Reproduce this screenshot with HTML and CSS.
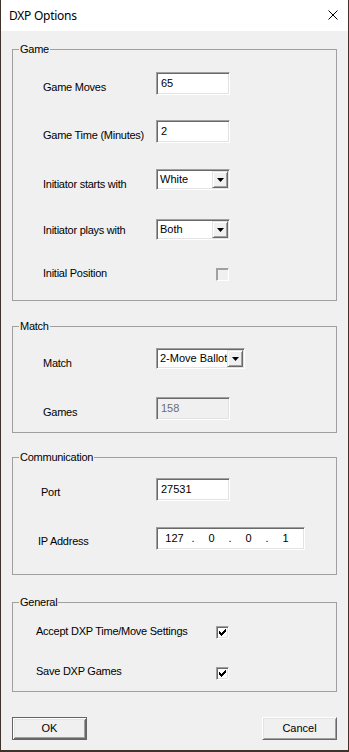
FILE: index.html
```html
<!DOCTYPE html>
<html>
<head>
<meta charset="utf-8">
<link rel="stylesheet" href="styles.css">
</head>
<body>
<div class="window">
  <div class="titlebar">
    <span class="title">DXP Options</span>
    <svg class="close" width="10" height="10" viewBox="0 0 10 10"><path d="M0.5 0.5L9.5 9.5M9.5 0.5L0.5 9.5" stroke="#000" stroke-width="1" fill="none"/></svg>
  </div>
  <div class="client">
    <fieldset class="group g-game">
      <legend>Game</legend>
      <div class="row r-edit r-g1"><span class="label">Game Moves</span><div class="edit">65</div></div>
      <div class="row r-edit r-g2"><span class="label">Game Time (Minutes)</span><div class="edit">2</div></div>
      <div class="row r-combo r-g3"><span class="label">Initiator starts with</span><div class="combo"><span class="val">White</span><span class="dd"><svg width="7" height="4" viewBox="0 0 7 4"><path d="M0 0h7L3.5 4z" fill="#000"/></svg></span></div></div>
      <div class="row r-combo r-g4"><span class="label">Initiator plays with</span><div class="combo"><span class="val">Both</span><span class="dd"><svg width="7" height="4" viewBox="0 0 7 4"><path d="M0 0h7L3.5 4z" fill="#000"/></svg></span></div></div>
      <div class="row r-check r-g5 wide"><span class="label">Initial Position</span><div class="check disabled"></div></div>
    </fieldset>

    <fieldset class="group g-match">
      <legend>Match</legend>
      <div class="row r-combo r-m1"><span class="label">Match</span><div class="combo combo-wide"><span class="val">2-Move Ballot</span><span class="dd"><svg width="7" height="4" viewBox="0 0 7 4"><path d="M0 0h7L3.5 4z" fill="#000"/></svg></span></div></div>
      <div class="row r-edit r-m2"><span class="label">Games</span><div class="edit disabled">158</div></div>
    </fieldset>

    <fieldset class="group g-comm">
      <legend>Communication</legend>
      <div class="row r-edit r-c1"><span class="label">Port</span><div class="edit">27531</div></div>
      <div class="row r-edit r-c2"><span class="label">IP Address</span><div class="edit ip"><span class="oct">127</span><span class="dot">.</span><span class="oct">0</span><span class="dot">.</span><span class="oct">0</span><span class="dot">.</span><span class="oct">1</span></div></div>
    </fieldset>

    <fieldset class="group g-gen">
      <legend>General</legend>
      <div class="row r-check r-e1 wide"><span class="label">Accept DXP Time/Move Settings</span><div class="check"><svg width="7" height="7" viewBox="0 0 7 7" shape-rendering="crispEdges"><path d="M0 2h1v3h-1z M1 3h1v3h-1z M2 4h1v3h-1z M3 3h1v3h-1z M4 2h1v3h-1z M5 1h1v3h-1z M6 0h1v3h-1z" fill="#000"/></svg></div></div>
      <div class="row r-check r-e2 wide"><span class="label">Save DXP Games</span><div class="check"><svg width="7" height="7" viewBox="0 0 7 7" shape-rendering="crispEdges"><path d="M0 2h1v3h-1z M1 3h1v3h-1z M2 4h1v3h-1z M3 3h1v3h-1z M4 2h1v3h-1z M5 1h1v3h-1z M6 0h1v3h-1z" fill="#000"/></svg></div></div>
    </fieldset>

    <div class="buttons">
      <div class="btn default">OK</div>
      <div class="btn">Cancel</div>
    </div>
  </div>
</div>
</body>
</html>
```
FILE: styles.css
```css
html, body {
  margin: 0;
  padding: 0;
}
body {
  background: #3e322a;
  width: 349px;
  height: 752px;
  overflow: hidden;
  font-family: "Liberation Sans", Arial, sans-serif;
  font-size: 11px;
  color: #000;
}
.window {
  margin: 0 1px;
  width: 347px;
  height: 750px;
  background: #f0f0f0;
  display: flex;
  flex-direction: column;
}
.titlebar {
  height: 31px;
  background: #fff;
  display: flex;
  align-items: center;
  justify-content: space-between;
  padding: 0 10px 0 8px;
  flex: none;
}
.title {
  font-family: "Noto Sans", "Segoe UI", sans-serif;
  font-size: 12px;
  line-height: 31px;
  letter-spacing: -0.25px;
  color: #000;
}
.close {
  display: block;
  margin-top: -1px;
}
.client {
  padding: 12px 11px 0 11px;
  display: flex;
  flex-direction: column;
}
.group {
  margin: 0;
  padding: 0;
  border: 1px solid #a0a0a0;
  min-width: 0;
}
.group legend {
  margin-left: 6px;
  padding: 0 1px;
  height: 13px;
  line-height: 13px;
  font-size: 11px;
  letter-spacing: -0.25px;
}
.g-game { padding-bottom: 19px; }
.g-match { margin-top: 19px; padding-bottom: 12px; }
.g-comm { margin-top: 18px; padding-bottom: 24px; }
.g-gen { margin-top: 21px; padding-bottom: 11px; }

.row {
  display: grid;
  grid-template-columns: 143px auto;
  align-items: start;
}
.row.wide { grid-template-columns: 203px auto; }
.r-edit { height: 23px; }
.r-combo { height: 21px; }
.r-check { height: 14px; }
.label {
  display: block;
  height: 13px;
  line-height: 13px;
  white-space: nowrap;
  letter-spacing: -0.25px;
  margin-top: 9px;
  padding-left: 30px;
}
.r-g1 { margin-top: 16px; }
.r-g2 { margin-top: 25px; }
.r-g3 { margin-top: 26px; }
.r-g4 { margin-top: 29px; }
.r-g4 .label { margin-top: 5px; }
.r-g5 { margin-top: 27px; }
.r-g5 .label { margin-top: 0; }
.r-g5 .check { margin-top: 1px; }

.r-m1 { margin-top: 15px; }
.r-m2 { margin-top: 28px; }

.r-c1 { margin-top: 14px; }
.r-c1 .label { padding-left: 28px; margin-top: 8px; }
.r-c2 { margin-top: 26px; }
.r-c2 .label { padding-left: 25px; margin-top: 8px; }

.r-e1 { margin-top: 16px; }
.r-e1 .label { padding-left: 23px; margin-top: 0; }
.r-e1 .check { margin-top: 1px; }
.r-e2 { margin-top: 26px; height: 15px; }
.r-e2 .label { padding-left: 23px; margin-top: 0; }
.r-e2 .check { margin-top: 2px; }

.edit {
  box-sizing: border-box;
  width: 74px;
  height: 23px;
  background: #fff;
  border: 1px solid;
  border-color: #a0a0a0 #fff #fff #a0a0a0;
  box-shadow: inset 1px 1px #696969, inset -1px -1px #e3e3e3;
  padding: 4px 0 0 4px;
  line-height: 13px;
  white-space: nowrap;
}
.edit.disabled {
  background: #f0f0f0;
  color: #6d6d6d;
}
.edit.ip {
  width: 149px;
  display: flex;
  padding-left: 3px;
}
.ip .oct {
  width: 29px;
  text-align: center;
}
.ip .dot {
  width: 8px;
  text-align: center;
}

.combo {
  box-sizing: border-box;
  width: 74px;
  height: 21px;
  background: #fff;
  border: 1px solid;
  border-color: #a0a0a0 #fff #fff #a0a0a0;
  box-shadow: inset 1px 1px #696969, inset -1px -1px #e3e3e3;
  padding: 1px;
  display: flex;
}
.combo-wide { width: 89px; }
.combo .val {
  flex: 1;
  line-height: 17px;
  padding-left: 2px;
  white-space: nowrap;
  overflow: hidden;
}
.combo .dd {
  box-sizing: border-box;
  width: 16px;
  height: 17px;
  background: #f0f0f0;
  border: 1px solid;
  border-color: #e3e3e3 #696969 #696969 #e3e3e3;
  box-shadow: inset 1px 1px #fff, inset -1px -1px #a0a0a0;
  display: flex;
  align-items: center;
  justify-content: center;
}
.combo .dd svg { display: block; }

.check {
  box-sizing: border-box;
  width: 13px;
  height: 13px;
  background: #fff;
  border: 1px solid;
  border-color: #a0a0a0 #fff #fff #a0a0a0;
  box-shadow: inset 1px 1px #696969, inset -1px -1px #e3e3e3;
  padding: 2px 0 0 2px;
}
.check svg { display: block; }
.check.disabled {
  background: #f0f0f0;
  box-shadow: inset 1px 1px #a0a0a0, inset -1px -1px #f0f0f0;
}

.buttons {
  margin-top: 25px;
  display: flex;
  justify-content: space-between;
}
.btn {
  box-sizing: border-box;
  width: 75px;
  height: 23px;
  background: #f0f0f0;
  border: 1px solid;
  border-color: #fff #696969 #696969 #fff;
  box-shadow: inset 1px 1px #e3e3e3, inset -1px -1px #a0a0a0;
  text-align: center;
  line-height: 19px;
  padding-top: 1px;
}
.btn.default {
  border: 1px solid #646464;
  box-shadow: inset 1px 1px #fff, inset -1px -1px #696969, inset 2px 2px #e3e3e3, inset -2px -2px #a0a0a0;
}
```
